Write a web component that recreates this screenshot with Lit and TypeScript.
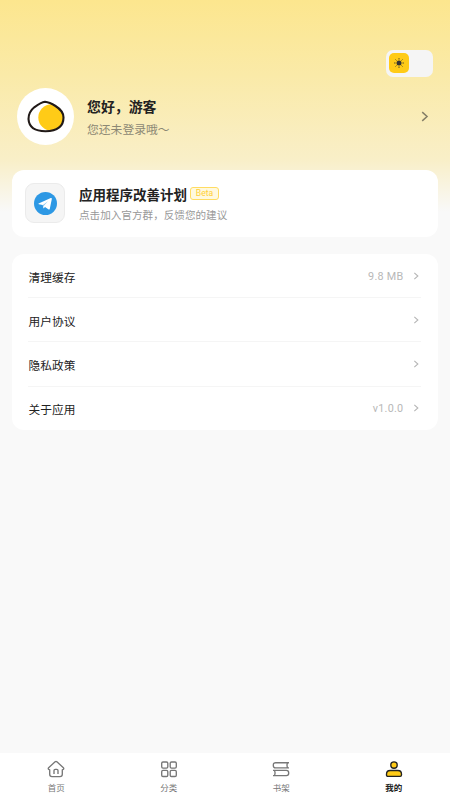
import { LitElement, css, html, svg } from "lit";
import { customElement, property } from "lit/decorators.js";

const chevron = html`
  <svg class="chevron" viewBox="0 0 12 12" fill="none" stroke="currentColor" stroke-width="1.6">
    <path d="M3.5 1.2 8.8 6l-5.3 4.8" />
  </svg>
`;

const tabIcons = {
  home: svg`
    <path d="M8.100 1.800q.9-.7 1.800 0l6.500 5.900q.8 1-.2 1.700l-.9.400v4.500q0 2.300-2.300 2.300H5q-2.300 0-2.300-2.300V9.800l-.9-.4q-1-.7-.2-1.700Z" />
    <path d="M7 13.900v-3.400q0-1.200 1.200-1.200h1.600q1.200 0 1.200 1.200v3.400" />
  `,
  category: svg`
    <rect x="1.700" y="2" width="6.100" height="6.100" rx="1.300" />
    <rect x="10.200" y="2" width="6.100" height="6.100" rx="1.300" />
    <rect x="1.700" y="10.400" width="6.100" height="6.100" rx="1.300" />
    <rect x="10.200" y="10.400" width="6.100" height="6.100" rx="1.300" />
  `,
  shelf: svg`
    <path d="M17 2.700H3.600Q1.300 2.700 1.300 5.300T3.600 7.900H17M15.400 2.700q-1 2.600 0 5.200" />
    <path d="M1 10.400h13.400q2.300 0 2.300 2.600t-2.300 2.600H1M2.600 10.400q1 2.600 0 5.200" />
  `,
  mine: svg`
    <circle cx="9" cy="5" r="3.200" fill="#ffcb17" />
    <path d="M1.500 15v-.8q0-3.700 3.700-3.700h7.600q3.700 0 3.700 3.700v.8q0 1.400-1.400 1.400H2.900q-1.400 0-1.400-1.400Z" fill="#ffcb17" />
  `,
};

type TabIcon = keyof typeof tabIcons;

@customElement("theme-switch")
export class ThemeSwitch extends LitElement {
  static styles = css`
    :host {
      display: block;
    }

    .track {
      display: flex;
      box-sizing: border-box;
      width: 47px;
      height: 27px;
      padding: 3px;
      border-radius: 7px;
      background: #f5f5f5;
    }

    .thumb {
      display: grid;
      place-items: center;
      width: 20px;
      height: 20px;
      border-radius: 5px;
      background: #ffcb17;
    }

    svg {
      width: 12px;
      height: 12px;
    }
  `;

  render() {
    return html`
      <div class="track" role="switch" aria-checked="false">
        <span class="thumb">
          <svg viewBox="0 0 12 12" stroke="#63582b" stroke-width="1">
            <circle cx="6" cy="6" r="2.5" fill="#333" stroke="none" />
            <path d="M6 1v1.600M6 9.400V11M1 6h1.600M9.400 6H11M2.500 2.500l1 1M8.500 8.500l1 1M2.500 9.500l1-1M8.500 3.500l1-1" />
          </svg>
        </span>
      </div>
    `;
  }
}

@customElement("setting-row")
export class SettingRow extends LitElement {
  static styles = css`
    :host {
      display: flex;
      align-items: center;
      box-sizing: border-box;
      height: 44.2px;
      border-bottom: 1px solid #f5f5f5;
      color: #222;
      font-size: 11.7px;
    }

    :host(:last-child) {
      height: 43.5px;
      border-bottom: none;
    }

    .label {
      flex: 1;
      padding-top: 1px;
      padding-left: 0.6px;
    }

    .value {
      padding-top: 1px;
      color: #b8b8b8;
      font-family: Roboto, sans-serif;
      font-size: 10.8px;
      letter-spacing: 0.25px;
    }

    .chevron {
      width: 8px;
      height: 8px;
      margin: 0 1px 0 8.6px;
      color: #b5b5b5;
    }
  `;

  @property() label = "";
  @property() value = "";

  render() {
    return html`
      <span class="label">${this.label}</span>
      ${this.value ? html`<span class="value">${this.value}</span>` : null}
      ${chevron}
    `;
  }
}

@customElement("tab-item")
export class TabItem extends LitElement {
  static styles = css`
    :host {
      display: flex;
      flex: 1;
      flex-direction: column;
      align-items: center;
      color: #777;
      font-size: 8.5px;
      line-height: 12px;
    }

    :host([active]) {
      color: #222;
      font-weight: 700;
    }

    svg {
      width: 18px;
      height: 18px;
      margin-bottom: 3px;
    }
  `;

  @property() label = "";
  @property() icon: TabIcon = "home";
  @property({ type: Boolean, reflect: true }) active = false;

  render() {
    return html`
      <svg viewBox="0 0 18 18" fill="none" stroke="currentColor" stroke-width="1.35" stroke-linejoin="round">
        ${tabIcons[this.icon]}
      </svg>
      <span>${this.label}</span>
    `;
  }
}

@customElement("app-root")
export class AppRoot extends LitElement {
  static styles = css`
    :host {
      display: flex;
      flex-direction: column;
      box-sizing: border-box;
      height: 100vh;
      background: linear-gradient(#fce68e 0, #faeaa8 75px, #f9efc8 160px, #f9f9f9 212px);
      font-family: "Noto Sans CJK SC", sans-serif;
    }

    .toolbar {
      display: flex;
      justify-content: flex-end;
      padding: 50px 17px 0;
    }

    .profile {
      display: flex;
      align-items: center;
      gap: 13px;
      height: 57px;
      padding: 11px 20px 0 17px;
    }

    .avatar {
      width: 57px;
      height: 57px;
      border-radius: 50%;
      background: #fff;
    }

    .greeting {
      flex: 1;
    }

    .name {
      color: #222;
      font-size: 13.9px;
      font-weight: 700;
      line-height: 20px;
    }

    .hint {
      margin-top: 4px;
      color: #8c8874;
      font-size: 11.8px;
      line-height: 18px;
    }

    .profile .chevron {
      width: 11px;
      height: 11px;
      color: #837d66;
    }

    .card {
      margin: 0 12px;
      border-radius: 12px;
      background: #fff;
    }

    .program {
      display: flex;
      align-items: center;
      box-sizing: border-box;
      height: 67px;
      margin-top: 25px;
      padding: 0 13px 1px;
    }

    .logo {
      display: grid;
      place-items: center;
      box-sizing: border-box;
      width: 40px;
      height: 40px;
      margin-right: 14px;
      border: 1px solid #ebebeb;
      border-radius: 9px;
      background: #f5f5f5;
    }

    .logo svg {
      width: 23px;
      height: 23px;
    }

    .title {
      display: flex;
      align-items: center;
      gap: 3px;
      color: #222;
      font-size: 13.5px;
      font-weight: 700;
      line-height: 20px;
    }

    .badge {
      box-sizing: border-box;
      width: 29px;
      height: 13px;
      border: 1px solid #ffdc62;
      border-radius: 3px;
      background: #fff9df;
      color: #ffcf38;
      font-family: Roboto, sans-serif;
      font-size: 8.6px;
      font-weight: 400;
      line-height: 11px;
      text-align: center;
    }

    .description {
      margin-top: 3px;
      color: #999;
      font-size: 10.6px;
      line-height: 16px;
    }

    .settings {
      margin-top: 17px;
      padding: 0 17px 0 16px;
    }

    .tabs {
      display: flex;
      box-sizing: border-box;
      height: 47px;
      margin-top: auto;
      padding-top: 7px;
      background: #fff;
    }
  `;

  render() {
    return html`
      <div class="toolbar"><theme-switch></theme-switch></div>

      <header class="profile">
        <svg class="avatar" viewBox="0 0 57 57">
          <defs>
            <clipPath id="egg">
              <path d="M28 13.800C24 14.200 21 16.500 17 19.500Q11.500 24 11.500 31C12 39.500 18 43.200 28.500 43.200C40 43 46.500 38.500 46.500 29.500C46.500 24.500 42.500 20.500 38.500 18Q32.500 14.200 28 13.800Z" />
            </clipPath>
          </defs>
          <circle cx="34.500" cy="29.500" r="13.200" fill="#ffcb17" clip-path="url(#egg)" />
          <path
            d="M28 13.800C24 14.200 21 16.500 17 19.500Q11.500 24 11.500 31C12 39.500 18 43.200 28.500 43.200C40 43 46.500 38.500 46.500 29.500C46.500 24.500 42.500 20.500 38.500 18Q32.500 14.200 28 13.800Z"
            fill="none"
            stroke="#211a18"
            stroke-width="2.100"
            stroke-linejoin="round"
          />
        </svg>
        <div class="greeting">
          <div class="name">您好，游客</div>
          <div class="hint">您还未登录哦～</div>
        </div>
        ${chevron}
      </header>

      <section class="card program">
        <div class="logo">
          <svg viewBox="0 0 24 24">
            <circle cx="12" cy="12" r="12" fill="#2d98e4" />
            <path
              d="M4.800 12.100 17.500 6.300q1.300-.3 1.100.9l-2.100 10.200q-.4 1.400-1.600.6L11.500 15.600l-1.600 1.500-.8-3.500-4.100-.9q-.8-.3-.2-.6Z"
              fill="#fff"
            />
            <path d="m9.300 13.600 5.300-4-4.100 4.600-.5 1.800Z" fill="#8cc7f0" />
          </svg>
        </div>
        <div>
          <div class="title">应用程序改善计划<span class="badge">Beta</span></div>
          <div class="description">点击加入官方群，反馈您的建议</div>
        </div>
      </section>

      <section class="card settings">
        <setting-row label="清理缓存" value="9.8 MB"></setting-row>
        <setting-row label="用户协议"></setting-row>
        <setting-row label="隐私政策"></setting-row>
        <setting-row label="关于应用" value="v1.0.0"></setting-row>
      </section>

      <nav class="tabs">
        <tab-item label="首页" icon="home"></tab-item>
        <tab-item label="分类" icon="category"></tab-item>
        <tab-item label="书架" icon="shelf"></tab-item>
        <tab-item label="我的" icon="mine" active></tab-item>
      </nav>
    `;
  }
}

declare global {
  interface HTMLElementTagNameMap {
    "theme-switch": ThemeSwitch;
    "setting-row": SettingRow;
    "tab-item": TabItem;
    "app-root": AppRoot;
  }
}
